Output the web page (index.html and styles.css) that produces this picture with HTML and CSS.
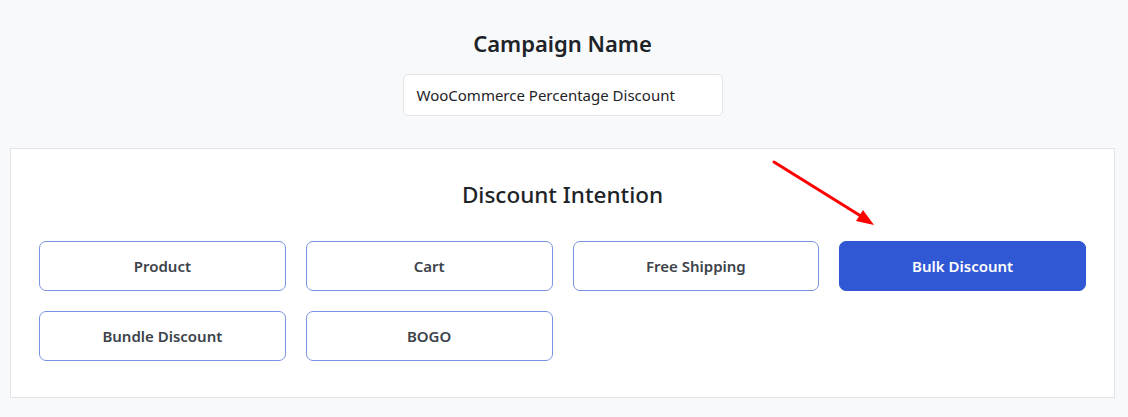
FILE: index.html
```html
<!DOCTYPE html>
<html>
<head>
<meta charset="utf-8">
<link rel="stylesheet" href="styles.css">
</head>
<body>
<div class="page">
  <section class="campaign">
    <h2 class="campaign-title">Campaign Name</h2>
    <div class="input">WooCommerce Percentage Discount</div>
  </section>
  <section class="card">
    <h2 class="card-title">Discount Intention</h2>
    <div class="grid">
      <button class="opt">Product</button>
      <button class="opt">Cart</button>
      <button class="opt">Free Shipping</button>
      <button class="opt active">Bulk Discount</button>
      <button class="opt">Bundle Discount</button>
      <button class="opt">BOGO</button>
    </div>
  </section>
  <svg class="arrow" width="120" height="80" viewBox="0 0 120 80">
    <line x1="4" y1="3" x2="94" y2="59" stroke="#ff0000" stroke-width="3" stroke-linecap="round"/>
    <polygon points="104,66 86,62 93,51" fill="#ff0000"/>
  </svg>
</div>
</body>
</html>
```
FILE: styles.css
```css
html, body {
  margin: 0;
  padding: 0;
  background: #f8f9fb;
  font-family: "Noto Sans", "Open Sans", sans-serif;
  color: #1d2327;
}
.page {
  position: relative;
  width: 1105px;
  height: 417px;
  margin-left: 10px;
  padding-top: 27px;
  box-sizing: border-box;
}
.campaign {
  display: flex;
  flex-direction: column;
  align-items: center;
}
.campaign-title {
  margin: 0;
  font-size: 22px;
  line-height: 32px;
  font-weight: 600;
}
.input {
  margin-top: 15px;
  width: 320px;
  height: 42px;
  box-sizing: border-box;
  border: 1px solid #e2e4e8;
  border-radius: 5px;
  background: #fff;
  padding: 0 13px;
  display: flex;
  align-items: center;
  font-size: 15px;
  color: #1d2327;
}
.card {
  margin-top: 32px;
  background: #fff;
  border: 1px solid #e1e3e6;
  padding: 30px 28px 36px;
}
.card-title {
  margin: 0;
  text-align: center;
  font-size: 22.5px;
  line-height: 32px;
  font-weight: 500;
}
.grid {
  margin-top: 30px;
  display: grid;
  grid-template-columns: repeat(4, 1fr);
  gap: 20px 20px;
}
.opt {
  height: 50px;
  border: 1px solid #7b93e0;
  border-radius: 7px;
  background: #fff;
  font-family: inherit;
  font-size: 15px;
  font-weight: 600;
  color: #3c434a;
  padding: 0;
}
.opt.active {
  background: #3158d4;
  border-color: #3158d4;
  color: #fff;
}
.arrow {
  position: absolute;
  left: 760px;
  top: 159px;
}
```
